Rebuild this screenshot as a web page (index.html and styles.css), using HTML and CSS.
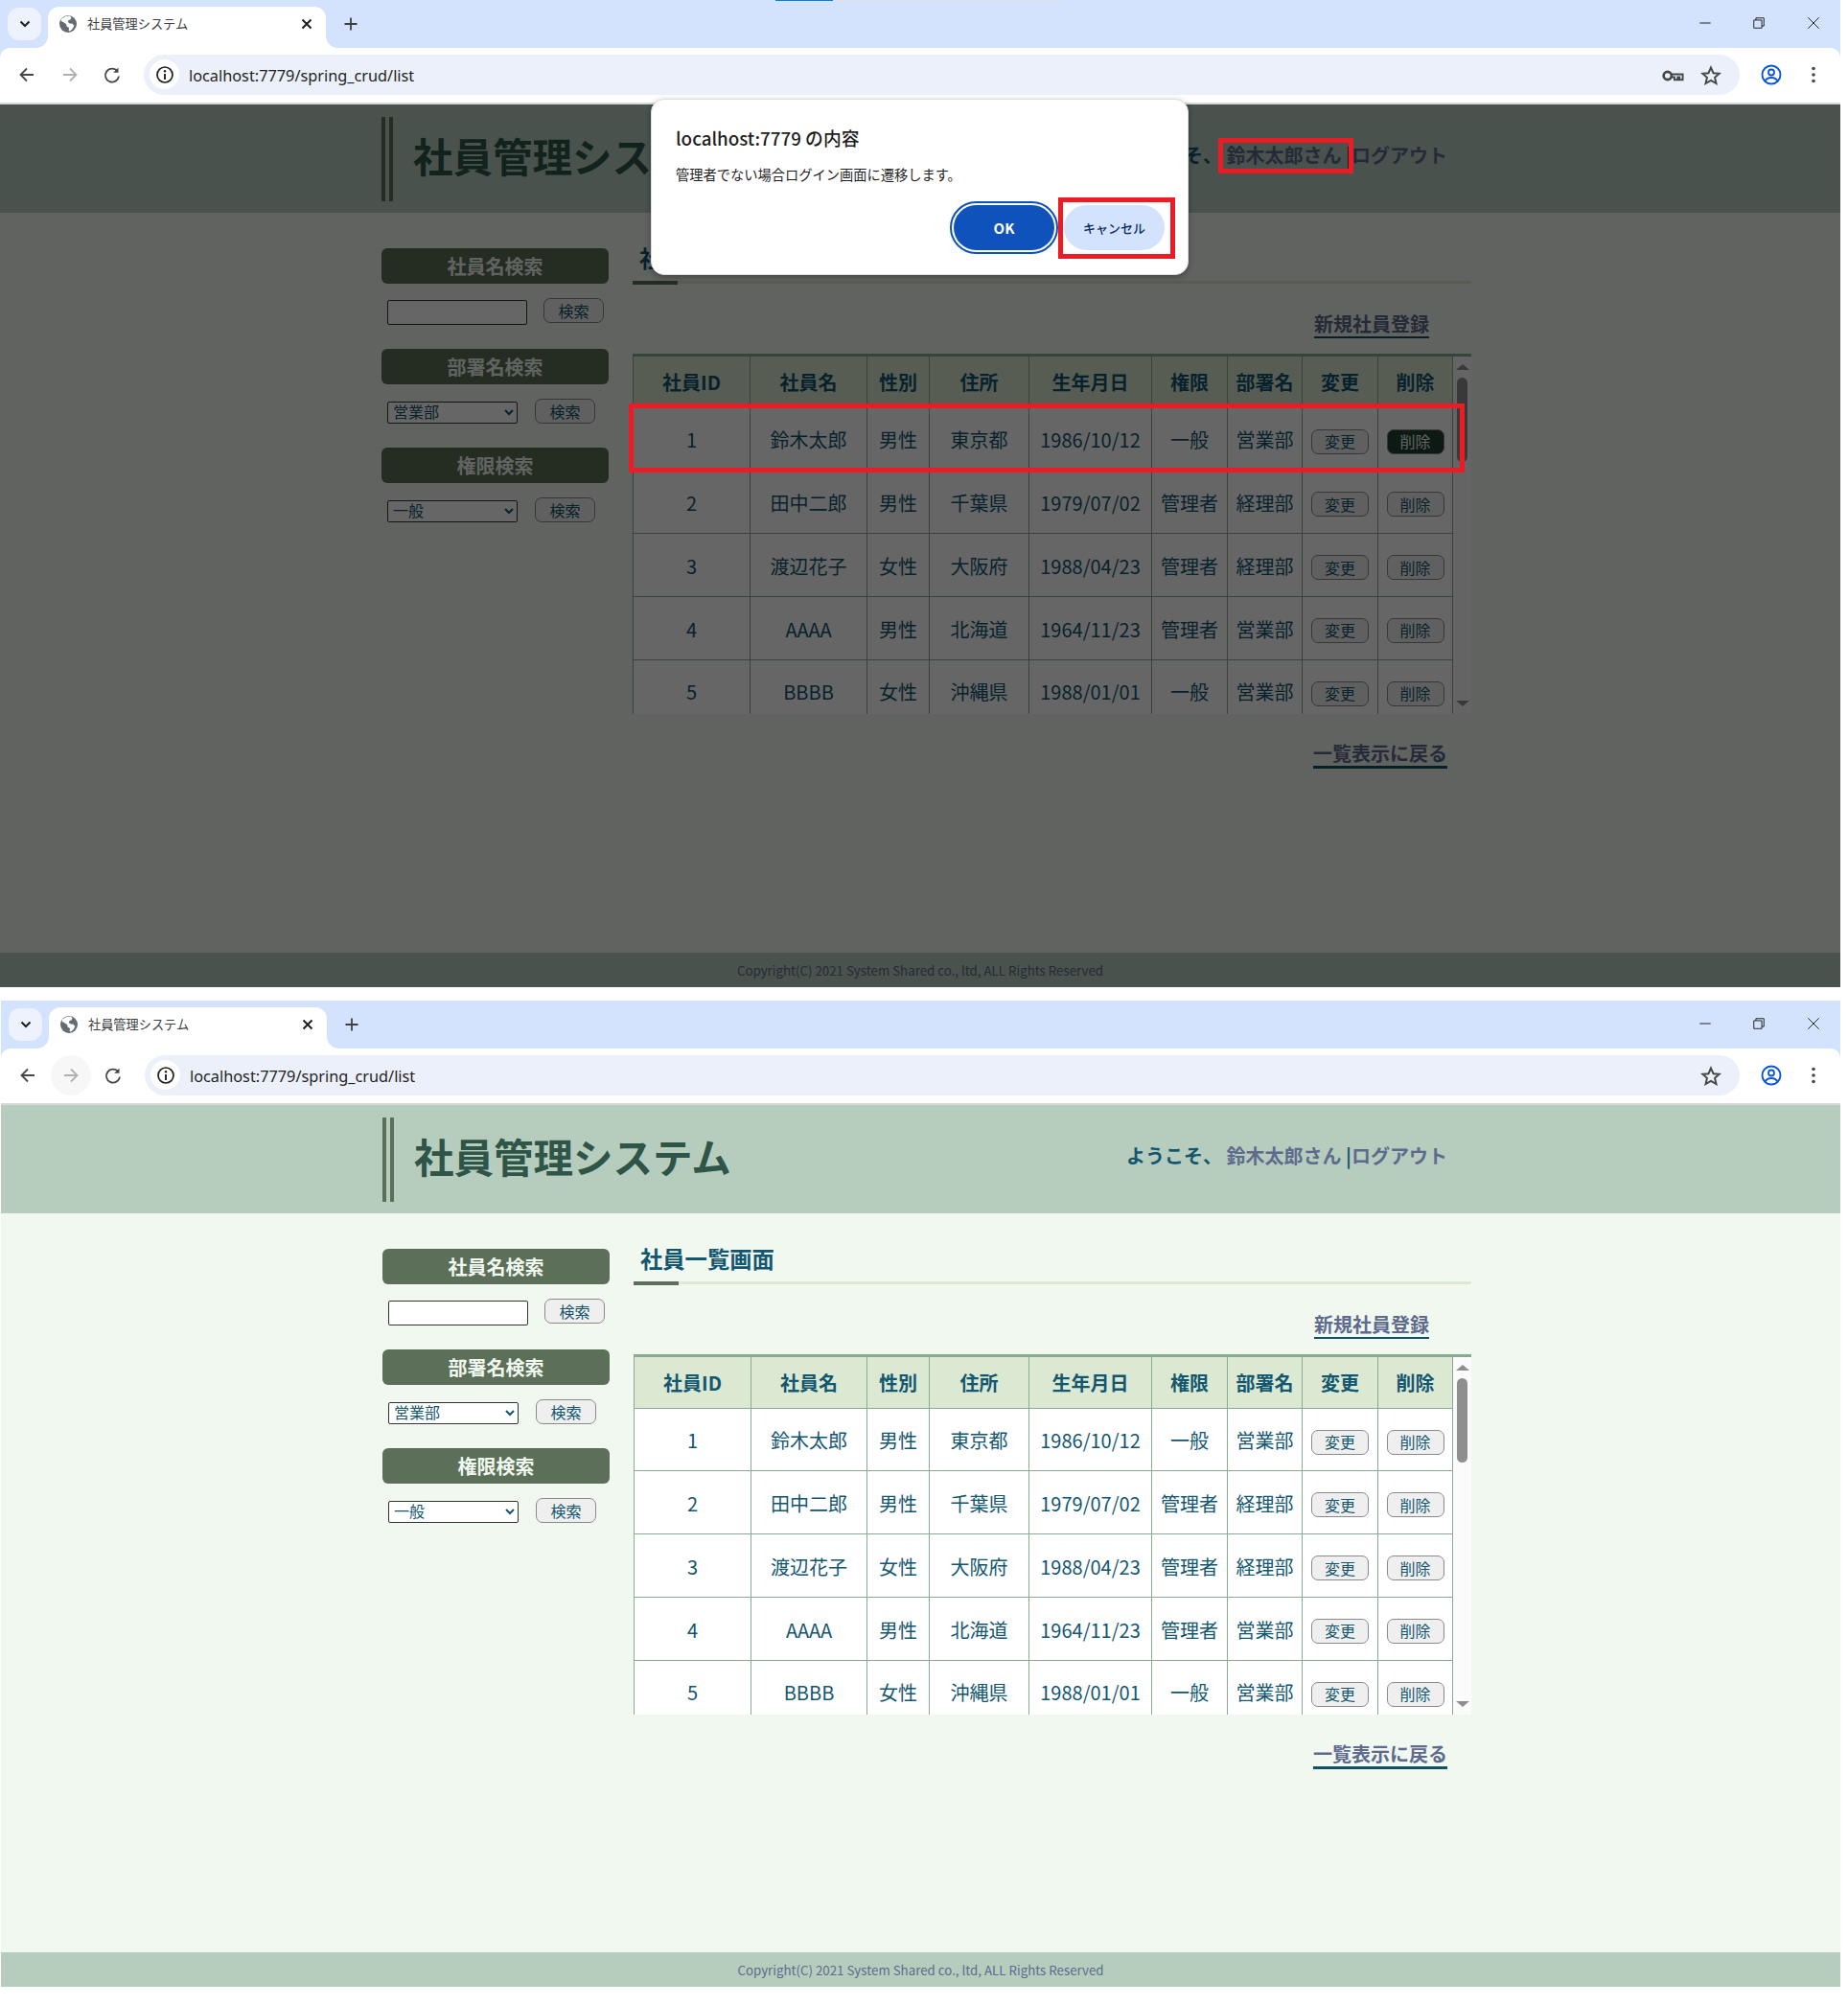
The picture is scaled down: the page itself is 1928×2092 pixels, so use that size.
FILE: index.html
```html
<!DOCTYPE html>
<html lang="ja">
<head>
<meta charset="utf-8">
<title>社員管理システム</title>
<link rel="stylesheet" href="styles.css">
</head>
<body>
<svg class="defs" width="0" height="0" aria-hidden="true">
  <defs>
    <symbol id="i-chev" viewBox="0 0 16 16"><path d="M3.5 5.5 8 10l4.5-4.5" fill="none" stroke="#1f1f1f" stroke-width="2"/></symbol>
    <symbol id="i-globe" viewBox="0 0 20 20"><circle cx="10" cy="10" r="9" fill="#666b72"/><path d="M7.5 2 11.5 1.6l2 1.6-1 2.3-2 .6-.6 2 1.8 1.4 3 .2 1.6 2.2-1.8 3.4-2.6 2.2-1.2-.4.3-3.2-2.4-1.4-.5-2.2-3.5-2.6-2-.6.6-2.6L5 3.6Z" fill="#fff"/></symbol>
    <symbol id="i-x" viewBox="0 0 16 16"><path d="M3.5 3.5 12.5 12.5M12.5 3.5 3.5 12.5" stroke="#1f1f1f" stroke-width="2"/></symbol>
    <symbol id="i-plus" viewBox="0 0 16 16"><path d="M8 1.5V14.500M1.500 8H14.500" stroke="#3c4043" stroke-width="1.800"/></symbol>
    <symbol id="i-back" viewBox="0 0 20 20"><path d="M17 10H4M10 3.500 3.500 10 10 16.500" fill="none" stroke="#474747" stroke-width="1.800"/></symbol>
    <symbol id="i-fwd" viewBox="0 0 20 20"><path d="M3 10H16M10 3.500 16.500 10 10 16.500" fill="none" stroke="#b0b0b0" stroke-width="1.800"/></symbol>
    <symbol id="i-reload" viewBox="0 0 20 20"><path d="M15.500 6.300A7 7 0 1 0 16.900 11.500" fill="none" stroke="#474747" stroke-width="1.800"/><path d="M16.500 2.500V7.800H11.200Z" fill="#474747"/></symbol>
    <symbol id="i-info" viewBox="0 0 20 20"><circle cx="10" cy="10" r="8" fill="none" stroke="#1f1f1f" stroke-width="1.700"/><path d="M10 9V15" stroke="#1f1f1f" stroke-width="1.900"/><circle cx="10" cy="6.300" r="1.200" fill="#1f1f1f"/></symbol>
    <symbol id="i-key" viewBox="0 0 24 14"><circle cx="6" cy="7" r="4.300" fill="none" stroke="#474747" stroke-width="2.800"/><path d="M10.500 5.500H22.500V11.500H19V8.500H17V11.500H13.500V8.500H10.500Z" fill="none" stroke="#474747" stroke-width="2"/></symbol>
    <symbol id="i-star" viewBox="0 0 20 20"><path d="M10 2.300 12.300 7.500 17.900 8 13.700 11.700 15 17.300 10 14.400 5 17.300 6.300 11.700 2.100 8 7.700 7.500Z" fill="none" stroke="#474747" stroke-width="1.800"/></symbol>
    <symbol id="i-user" viewBox="0 0 24 24"><circle cx="12" cy="12" r="9.500" fill="none" stroke="#0b57d0" stroke-width="1.900"/><circle cx="12" cy="9.500" r="3" fill="none" stroke="#0b57d0" stroke-width="1.800"/><path d="M5.500 18.500C7 15.800 9 15 12 15s5 .8 6.500 3.500" fill="none" stroke="#0b57d0" stroke-width="1.800"/></symbol>
    <symbol id="i-dots" viewBox="0 0 20 20"><circle cx="10" cy="3.500" r="1.800" fill="#474747"/><circle cx="10" cy="10" r="1.800" fill="#474747"/><circle cx="10" cy="16.500" r="1.800" fill="#474747"/></symbol>
    <symbol id="i-min" viewBox="0 0 16 16"><path d="M1.500 8H14.500" stroke="#1f1f1f" stroke-width="1.100"/></symbol>
    <symbol id="i-max" viewBox="0 0 16 16"><path d="M2 4.500H11.500V14H2Z M4.500 4.500V2H14V11.500H11.500" fill="none" stroke="#1f1f1f" stroke-width="1.100"/></symbol>
    <symbol id="i-close" viewBox="0 0 16 16"><path d="M1.500 1.500 14.500 14.500M14.500 1.500 1.500 14.500" stroke="#1f1f1f" stroke-width="1.100"/></symbol>
  </defs>
</svg>

<section class="shot shot-a">
  <div class="loading"><span class="loading-done"></span><span class="loading-rest"></span></div>
  <div class="tabstrip">
    <button class="tabgroup"><svg class="ic16"><use href="#i-chev"/></svg></button>
    <div class="tab">
      <svg class="ic-globe"><use href="#i-globe"/></svg>
      <span class="tab-title">社員管理システム</span>
      <svg class="ic-x"><use href="#i-x"/></svg>
    </div>
    <svg class="ic-plus"><use href="#i-plus"/></svg>
    <div class="winbtns">
      <span class="winbtn"><svg class="ic-win"><use href="#i-min"/></svg></span>
      <span class="winbtn"><svg class="ic-win"><use href="#i-max"/></svg></span>
      <span class="winbtn"><svg class="ic-win"><use href="#i-close"/></svg></span>
    </div>
  </div>
  <div class="toolbar">
    <span class="navbtn"><svg class="ic20"><use href="#i-back"/></svg></span>
    <span class="navbtn"><svg class="ic20"><use href="#i-fwd"/></svg></span>
    <span class="navbtn"><svg class="ic20"><use href="#i-reload"/></svg></span>
    <div class="omni">
      <span class="infopill"><svg class="ic20"><use href="#i-info"/></svg></span>
      <span class="url">localhost:7779/spring_crud/list</span>
      <svg class="ic-key"><use href="#i-key"/></svg>
      <svg class="ic-star"><use href="#i-star"/></svg>
    </div>
    <span class="navbtn"><svg class="ic-user"><use href="#i-user"/></svg></span>
    <span class="navbtn"><svg class="ic20"><use href="#i-dots"/></svg></span>
  </div>
  <div class="page">
    <header class="head">
      <h1 class="title">社員管理システム</h1>
      <p class="welcome"><span>ようこそ、</span> <a class="link">鈴木太郎さん</a> <span>|</span><a class="link">ログアウト</a></p>
    </header>
    <div class="main">
      <aside class="side">
        <h3 class="side-h">社員名検索</h3>
        <div class="side-row side-row-text"><input class="txt" type="text"><button class="btn side-btn">検索</button></div>
        <h3 class="side-h">部署名検索</h3>
        <div class="side-row"><select class="sel"><option>営業部</option></select><button class="btn side-btn">検索</button></div>
        <h3 class="side-h">権限検索</h3>
        <div class="side-row"><select class="sel"><option>一般</option></select><button class="btn side-btn">検索</button></div>
      </aside>
      <div class="content">
        <h2 class="h2">社員一覧画面</h2>
        <div class="linkrow"><a class="ulink">新規社員登録</a></div>
        <div class="tblbox">
          <div class="tblscroll">
            <table class="tbl">
              <colgroup><col><col class="c2"><col class="c3"><col class="c4"><col class="c5"><col class="c6"><col class="c7"><col class="c8"><col class="c9"></colgroup>
              <thead><tr><th>社員ID</th><th>社員名</th><th>性別</th><th>住所</th><th>生年月日</th><th>権限</th><th>部署名</th><th>変更</th><th>削除</th></tr></thead>
              <tbody>
                <tr><td>1</td><td>鈴木太郎</td><td>男性</td><td>東京都</td><td>1986/10/12</td><td>一般</td><td>営業部</td><td><button class="btn">変更</button></td><td><button class="btn btn-hover">削除</button></td></tr>
                <tr><td>2</td><td>田中二郎</td><td>男性</td><td>千葉県</td><td>1979/07/02</td><td>管理者</td><td>経理部</td><td><button class="btn">変更</button></td><td><button class="btn">削除</button></td></tr>
                <tr><td>3</td><td>渡辺花子</td><td>女性</td><td>大阪府</td><td>1988/04/23</td><td>管理者</td><td>経理部</td><td><button class="btn">変更</button></td><td><button class="btn">削除</button></td></tr>
                <tr><td>4</td><td>AAAA</td><td>男性</td><td>北海道</td><td>1964/11/23</td><td>管理者</td><td>営業部</td><td><button class="btn">変更</button></td><td><button class="btn">削除</button></td></tr>
                <tr><td>5</td><td>BBBB</td><td>女性</td><td>沖縄県</td><td>1988/01/01</td><td>一般</td><td>営業部</td><td><button class="btn">変更</button></td><td><button class="btn">削除</button></td></tr>
              </tbody>
            </table>
          </div>
          <div class="sbar"><span class="sb-up"></span><span class="sb-thumb"></span><span class="sb-down"></span></div>
        </div>
        <div class="backrow"><a class="ulink ulink-back">一覧表示に戻る</a></div>
      </div>
    </div>
    <footer class="foot">Copyright(C) 2021 System Shared co., ltd, ALL Rights Reserved</footer>
    <div class="dim"></div>
  </div>
  <span class="mark mark-name"></span>
  <span class="mark mark-row"></span>
  <div class="dialog">
    <div class="dlg-title">localhost:7779 の内容</div>
    <div class="dlg-msg">管理者でない場合ログイン画面に遷移します。</div>
    <div class="dlg-btns">
      <button class="dlg-ok">OK</button>
      <button class="dlg-cancel">キャンセル</button>
    </div>
  </div>
  <span class="mark mark-cancel"></span>
</section>

<section class="shot shot-b">
  <div class="tabstrip">
    <button class="tabgroup"><svg class="ic16"><use href="#i-chev"/></svg></button>
    <div class="tab">
      <svg class="ic-globe"><use href="#i-globe"/></svg>
      <span class="tab-title">社員管理システム</span>
      <svg class="ic-x"><use href="#i-x"/></svg>
    </div>
    <svg class="ic-plus"><use href="#i-plus"/></svg>
    <div class="winbtns">
      <span class="winbtn"><svg class="ic-win"><use href="#i-min"/></svg></span>
      <span class="winbtn"><svg class="ic-win"><use href="#i-max"/></svg></span>
      <span class="winbtn"><svg class="ic-win"><use href="#i-close"/></svg></span>
    </div>
  </div>
  <div class="toolbar">
    <span class="navbtn"><svg class="ic20"><use href="#i-back"/></svg></span>
    <span class="navbtn navbtn-hover"><svg class="ic20"><use href="#i-fwd"/></svg></span>
    <span class="navbtn"><svg class="ic20"><use href="#i-reload"/></svg></span>
    <div class="omni">
      <span class="infopill"><svg class="ic20"><use href="#i-info"/></svg></span>
      <span class="url">localhost:7779/spring_crud/list</span>
      <svg class="ic-star"><use href="#i-star"/></svg>
    </div>
    <span class="navbtn"><svg class="ic-user"><use href="#i-user"/></svg></span>
    <span class="navbtn"><svg class="ic20"><use href="#i-dots"/></svg></span>
  </div>
  <div class="page">
    <header class="head">
      <h1 class="title">社員管理システム</h1>
      <p class="welcome"><span>ようこそ、</span> <a class="link">鈴木太郎さん</a> <span>|</span><a class="link">ログアウト</a></p>
    </header>
    <div class="main">
      <aside class="side">
        <h3 class="side-h">社員名検索</h3>
        <div class="side-row side-row-text"><input class="txt" type="text"><button class="btn side-btn">検索</button></div>
        <h3 class="side-h">部署名検索</h3>
        <div class="side-row"><select class="sel"><option>営業部</option></select><button class="btn side-btn">検索</button></div>
        <h3 class="side-h">権限検索</h3>
        <div class="side-row"><select class="sel"><option>一般</option></select><button class="btn side-btn">検索</button></div>
      </aside>
      <div class="content">
        <h2 class="h2">社員一覧画面</h2>
        <div class="linkrow"><a class="ulink">新規社員登録</a></div>
        <div class="tblbox">
          <div class="tblscroll">
            <table class="tbl">
              <colgroup><col><col class="c2"><col class="c3"><col class="c4"><col class="c5"><col class="c6"><col class="c7"><col class="c8"><col class="c9"></colgroup>
              <thead><tr><th>社員ID</th><th>社員名</th><th>性別</th><th>住所</th><th>生年月日</th><th>権限</th><th>部署名</th><th>変更</th><th>削除</th></tr></thead>
              <tbody>
                <tr><td>1</td><td>鈴木太郎</td><td>男性</td><td>東京都</td><td>1986/10/12</td><td>一般</td><td>営業部</td><td><button class="btn">変更</button></td><td><button class="btn">削除</button></td></tr>
                <tr><td>2</td><td>田中二郎</td><td>男性</td><td>千葉県</td><td>1979/07/02</td><td>管理者</td><td>経理部</td><td><button class="btn">変更</button></td><td><button class="btn">削除</button></td></tr>
                <tr><td>3</td><td>渡辺花子</td><td>女性</td><td>大阪府</td><td>1988/04/23</td><td>管理者</td><td>経理部</td><td><button class="btn">変更</button></td><td><button class="btn">削除</button></td></tr>
                <tr><td>4</td><td>AAAA</td><td>男性</td><td>北海道</td><td>1964/11/23</td><td>管理者</td><td>営業部</td><td><button class="btn">変更</button></td><td><button class="btn">削除</button></td></tr>
                <tr><td>5</td><td>BBBB</td><td>女性</td><td>沖縄県</td><td>1988/01/01</td><td>一般</td><td>営業部</td><td><button class="btn">変更</button></td><td><button class="btn">削除</button></td></tr>
              </tbody>
            </table>
          </div>
          <div class="sbar"><span class="sb-up"></span><span class="sb-thumb"></span><span class="sb-down"></span></div>
        </div>
        <div class="backrow"><a class="ulink ulink-back">一覧表示に戻る</a></div>
      </div>
    </div>
    <footer class="foot">Copyright(C) 2021 System Shared co., ltd, ALL Rights Reserved</footer>
  </div>
</section>
</body>
</html>
```

FILE: styles.css
```css
* { box-sizing: border-box; }
html, body { margin: 0; padding: 0; background: #fff; }
body { width: 1928px; height: 2092px; overflow: hidden; font-family: "Noto Sans CJK JP", "Noto Sans", sans-serif; }
.defs { position: absolute; }
svg { display: block; flex: none; }

.shot { position: relative; display: flex; flex-direction: column; overflow: hidden; background: #d3e3fd; }
.shot-a { width: 1920px; height: 1030px; margin-bottom: 14px; }
.shot-b { width: 1919px; height: 1029px; margin-left: 1px; }

/* loading strip */
.loading { position: absolute; top: 0; left: 809px; display: flex; height: 1px; }
.loading-done { width: 60px; background: #0b7ddc; }
.loading-rest { width: 240px; background: #dcdfe3; }

/* tab strip */
.tabstrip { height: 50px; display: flex; align-items: flex-start; flex: none; padding-left: 8px; }
.tabgroup { width: 35px; height: 34px; margin-top: 8px; border: 0; border-radius: 12px; background: #edf2fd; display: flex; align-items: center; justify-content: center; padding: 0; }
.ic16 { width: 16px; height: 16px; }
.tab { position: relative; width: 290px; height: 43px; margin: 7px 0 0 7px; background: #fff; border-radius: 12px 12px 0 0; display: flex; align-items: center; padding: 0 12px 7px 11px; }
.tab::before, .tab::after { content: ""; position: absolute; bottom: 0; width: 12px; height: 12px; }
.tab::before { left: -12px; background: radial-gradient(circle at 0 0, #d3e3fd 11.5px, #fff 12px); }
.tab::after { right: -12px; background: radial-gradient(circle at 100% 0, #d3e3fd 11.5px, #fff 12px); }
.ic-globe { width: 20px; height: 20px; }
.tab-title { margin-left: 10px; flex: 1; font-size: 13.200px; line-height: 20px; color: #3c4043; white-space: nowrap; }
.ic-x { width: 16px; height: 16px; }
.ic-plus { width: 16px; height: 16px; margin: 17px 0 0 18px; }
.winbtns { margin-left: auto; display: flex; }
.winbtn { width: 56.500px; height: 48px; display: flex; align-items: center; justify-content: center; }
.ic-win { width: 14px; height: 14px; }

/* toolbar */
.toolbar { height: 59px; flex: none; background: #fff; border-radius: 10px 10px 0 0; border-bottom: 2px solid #d9d9d9; display: flex; align-items: center; padding: 0 7px 2px 7px; gap: 2.500px; }
.navbtn { width: 42px; height: 42px; border-radius: 50%; display: flex; align-items: center; justify-content: center; }
.navbtn-hover { background: #f7f7f7; }
.ic20 { width: 20px; height: 20px; }
.omni { flex: 1; height: 42px; margin: 0 9.500px; border-radius: 21px; background: #ebf0fa; display: flex; align-items: center; padding: 0 19px 0 6px; }
.infopill { width: 31px; height: 31px; border-radius: 50%; background: #fff; display: flex; align-items: center; justify-content: center; }
.url { margin-left: 10px; padding-top: 2px; flex: 1; font-family: "Noto Sans", sans-serif; font-size: 16.300px; color: #1f1f1f; white-space: nowrap; }
.ic-key { width: 23px; height: 14px; margin: 2px 17px 0 0; }
.ic-star { width: 22px; height: 22px; margin-top: 2px; }
.ic-user { width: 24px; height: 24px; }

/* page */
.page { position: relative; flex: 1; min-height: 0; display: flex; flex-direction: column; background: #f1f8f0; }
.dim { position: absolute; inset: 0; background: rgba(0, 0, 0, .6); }
.head { height: 113px; flex: none; background: #b6cdbd; display: flex; justify-content: space-between; padding: 13px 410px 0 398px; }
.title { margin: 0; height: 88px; border-left: 12px double #5c7059; padding-left: 21px; font-size: 41.500px; line-height: 81px; font-weight: 700; color: #2e5548; white-space: nowrap; }
.welcome { margin: 27px 0 0; font-size: 20px; line-height: 26px; font-weight: 700; color: #135670; white-space: nowrap; }
.link { color: #5e6a8e; font-weight: 700; }

.main { flex: 1; min-height: 0; display: flex; gap: 25px; padding: 37px 385px 0 398px; }
.side { width: 237px; flex: none; }
.side-h { margin: 0; height: 37px; border-radius: 6px; background: #5c7059; color: #f1f8f0; font-size: 20px; line-height: 38px; font-weight: 700; text-align: center; }
.side-row { display: flex; align-items: flex-end; gap: 17px; height: 26px; margin: 15px 0 25px; padding-left: 6px; }
.side-row-text { height: 28px; }
.txt { width: 146px; height: 26px; border: 1px solid #333; border-radius: 2px; background: #fff; padding: 0 4px; }
.sel { width: 136px; height: 23px; border: 1px solid #333; border-radius: 2px; background: #fff; font-family: "Liberation Sans", "Noto Sans CJK JP", sans-serif; font-size: 16px; color: #135670; padding: 0 0 1px 1px; }
.btn { width: 60px; height: 26px; padding: 0 0 1px; border: 1px solid #8a8a8a; border-radius: 7px; background: #efefef; font-family: inherit; font-size: 16px; line-height: 22px; color: #135670; }
.side-btn { width: 63px; }
.side-row-text .side-btn { align-self: flex-start; }
.side-row .sel + .side-btn { margin-left: 1px; }
.btn-hover { background: #224133; color: #f1f8f0; }

.content { flex: 1; min-width: 0; }
.h2 { margin: 0; position: relative; height: 37px; padding-left: 7px; border-bottom: 3px solid #dbe9d3; font-size: 23.300px; line-height: 21px; font-weight: 700; color: #135670; white-space: nowrap; }
.h2::after { content: ""; position: absolute; left: 0; bottom: -4px; width: 47px; height: 4px; background: #5c7059; }
.linkrow { display: flex; justify-content: flex-end; padding-right: 44px; margin-top: 29px; }
.ulink { display: block; height: 28px; border-bottom: 2px solid #0f5066; font-size: 20px; line-height: 26px; font-weight: 700; color: #5e6a8e; white-space: nowrap; }
.ulink-back { height: 29px; border-bottom-width: 3px; }
.backrow { display: flex; justify-content: flex-end; padding-right: 25px; margin-top: 28px; }

.tblbox { display: flex; height: 376px; margin-top: 16px; border-top: 3px solid #8aab92; }
.tblscroll { flex: 1; min-width: 0; overflow: hidden; background: #fff; }
.tbl { width: 100%; table-layout: fixed; border-collapse: collapse; }
.c2 { width: 121px; }
.shot-a .c2 { width: 122px; }
.c3 { width: 65px; }
.c4 { width: 104px; }
.c5 { width: 128px; }
.c6 { width: 79px; }
.c7 { width: 78px; }
.c8 { width: 79px; }
.c9 { width: 78px; }
.tbl th, .tbl td { border: 1px solid #8aab92; padding: 0; text-align: center; font-size: 20px; color: #135670; }
.tbl th { height: 53px; border-top: 0; background: #dbe9d3; font-weight: 700; }
.tbl td { height: 65.750px; padding-top: 2px; font-weight: 400; }
.tbl .btn { vertical-align: middle; margin-top: -2px; }

.sbar { width: 19px; flex: none; display: flex; flex-direction: column; align-items: center; background: #fbfbfb; }
.sb-up { margin-top: 8px; border: solid transparent; border-width: 0 7px 6px; border-bottom-color: #8f8f8f; }
.sb-thumb { width: 11px; height: 88px; margin-top: 8px; border-radius: 6px; background: #8f8f8f; }
.sb-down { margin-top: auto; margin-bottom: 8px; border: solid transparent; border-width: 6px 7px 0; border-top-color: #8f8f8f; }

.foot { height: 36px; flex: none; background: #b6cdbd; color: #5e6a8e; font-size: 13.300px; line-height: 38px; text-align: center; white-space: nowrap; }

/* annotations & dialog, over the window */
.mark { position: absolute; border: 5px solid #ed1c24; }
.mark-name { left: 1271px; top: 144px; width: 141px; height: 37px; }
.mark-row { left: 656px; top: 421px; width: 872px; height: 72px; }
.mark-cancel { left: 1104px; top: 206px; width: 122px; height: 64px; }
.dialog { position: absolute; left: 679px; top: 103px; width: 561px; height: 184px; background: #fff; border-radius: 14px; border: 1px solid #dedede; box-shadow: 0 2px 6px rgba(0, 0, 0, .3); padding: 27px 24px 0 25px; }
.dlg-title { font-size: 18.800px; line-height: 26px; font-weight: 500; color: #1f1f1f; white-space: nowrap; }
.dlg-msg { margin-top: 14px; font-size: 14.250px; line-height: 22px; color: #1f1f1f; white-space: nowrap; }
.dlg-btns { display: flex; justify-content: flex-end; gap: 10px; margin-top: 21px; }
.dlg-ok, .dlg-cancel { height: 47px; width: 105px; border: 0; border-radius: 24px; padding: 0; font-family: inherit; }
.dlg-ok { background: #0f52bb; color: #fff; font-size: 15px; font-weight: 700; outline: 2.500px solid #0f52bb; outline-offset: 2px; }
.dlg-cancel { background: #d3e3fd; color: #0a2a5e; font-size: 13px; font-weight: 500; }
```
